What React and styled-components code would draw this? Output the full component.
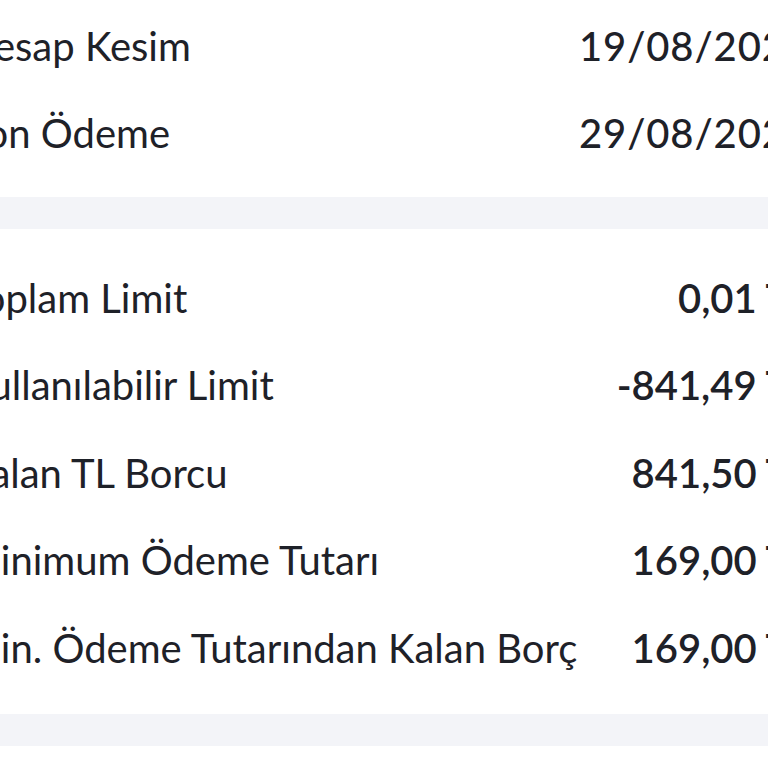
import React from "react";
import styled, { createGlobalStyle } from "styled-components";

const GlobalStyle = createGlobalStyle`
  html, body {
    margin: 0;
    padding: 0;
    background: #ffffff;
    overflow: hidden;
  }
  body {
    font-family: "Lato", "Noto Sans", sans-serif;
    color: #1e2128;
  }
`;

// the screen is wider than the window, cut on both sides
const Screen = styled.div`
  width: 846px;
  margin-left: -36px;
  background: #ffffff;
`;

const Section = styled.div`
  display: flex;
  flex-direction: column;
  padding: ${(p) => p.$pad};
  background: #ffffff;
`;

const Divider = styled.div`
  height: 32px;
  background: #f3f4f8;
`;

const Row = styled.div`
  height: 87.5px;
  display: flex;
  align-items: center;
  justify-content: space-between;
  gap: 40px;
`;

const Label = styled.span`
  font-size: 40px;
  font-weight: 400;
  white-space: nowrap;
`;

const Value = styled.span`
  font-size: 40px;
  font-weight: ${(p) => (p.$strong ? 600 : 500)};
  letter-spacing: ${(p) => (p.$strong ? "0" : "0.9px")};
  white-space: nowrap;
  text-align: right;
`;

const dates = [
  { label: "Hesap Kesim", value: "19/08/2025" },
  { label: "Son Ödeme", value: "29/08/2025" },
];

const limits = [
  { label: "Toplam Limit", value: "0,01 TL" },
  { label: "Kullanılabilir Limit", value: "-841,49 TL" },
  { label: "Kalan TL Borcu", value: "841,50 TL" },
  { label: "Minimum Ödeme Tutarı", value: "169,00 TL" },
  { label: "Min. Ödeme Tutarından Kalan Borç", value: "169,00 TL" },
];

export default function App() {
  return (
    <>
      <GlobalStyle />
      <Screen>
        <Section $pad="2px 0 20px">
          {dates.map((d) => (
            <Row key={d.label}>
              <Label>{d.label}</Label>
              <Value>{d.value}</Value>
            </Row>
          ))}
        </Section>
        <Divider />
        <Section $pad="25px 0 22.5px">
          {limits.map((d) => (
            <Row key={d.label}>
              <Label>{d.label}</Label>
              <Value $strong>{d.value}</Value>
            </Row>
          ))}
        </Section>
        <Divider />
        <Section $pad="0 0 40px" />
      </Screen>
    </>
  );
}
